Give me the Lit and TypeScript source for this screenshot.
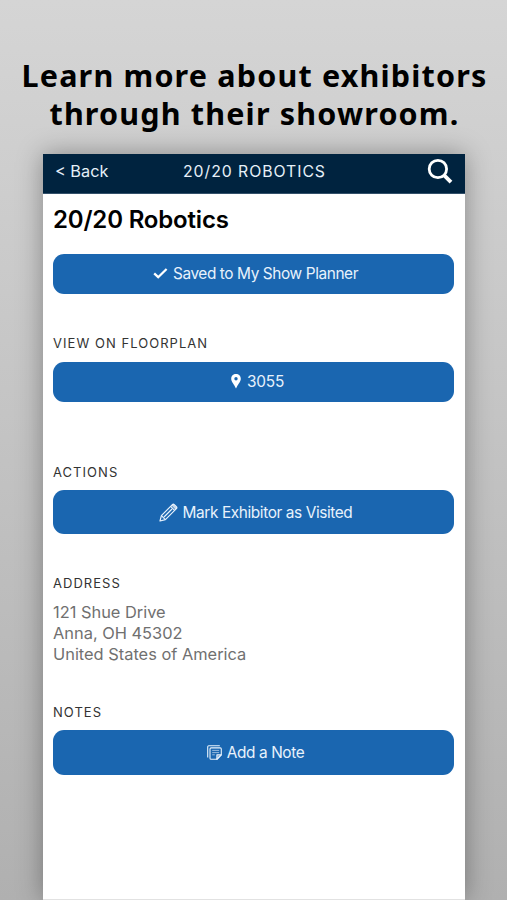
import { LitElement, html, css } from "lit";
import { customElement } from "lit/decorators.js";

const searchIcon = html`<svg class="search" width="28" height="28" viewBox="0 0 28 28" fill="none" stroke="#fff">
  <circle cx="11.9" cy="12" r="8.7" stroke-width="2.8"/><path d="M18.2 18.3L25 25.2" stroke-width="3.8"/></svg>`;
const checkIcon = html`<svg width="15" height="12" viewBox="0 0 15 12" fill="none" stroke="#fff" stroke-width="2.3"><path d="M1.2 5.4L5.2 9.2L13.6 1"/></svg>`;
const pinIcon = html`<svg width="10" height="15" viewBox="0 0 10 15"><path fill="#fff" fill-rule="evenodd" d="M5 0C2.2 0 .2 2.1.2 4.7C.2 7.8 3.4 10.6 5 14.6C6.6 10.6 9.8 7.8 9.8 4.7C9.8 2.1 7.8 0 5 0ZM5 3.1A1.7 1.7 0 1 1 5 6.5A1.7 1.7 0 1 1 5 3.1Z"/></svg>`;
const pencilIcon = html`<svg width="19" height="19" viewBox="0 0 19 19" fill="none" stroke="#e8f2fc" stroke-width="1.2" stroke-linejoin="round"><path d="M1 18L2.4 12.6L13.4 1.6Q14.3.7 15.3 1.6L17.4 3.7Q18.3 4.7 17.4 5.6L6.4 16.6Z"/><path d="M11.6 3.4L15.6 7.4M2.4 12.6L6.4 16.6M5 14L13 6"/><path d="M12.5 2.5L14.3.9L18 4.7L16.4 6.5Z" fill="#fff" fill-opacity=".75" stroke="none"/></svg>`;
const noteIcon = html`<svg width="15" height="15" viewBox="0 0 15 15" fill="none" stroke="#e8f2fc" stroke-width="1.1" stroke-linejoin="round"><path d="M.7 12.6V1.8Q.7.7 1.8.7H12.8"/><path d="M3 4Q3 2.9 4.1 2.9H13.2Q14.3 2.9 14.3 4V9.8L9.9 14.3H4.1Q3 14.3 3 13.2Z"/><path d="M9.9 14.3V9.8H14.3L9.9 14.3Z" fill="#e8f2fc" fill-opacity=".5"/><path d="M5.2 5.4H12.1M5.2 7.6H12.1M5.2 9.8H7.8" stroke-width=".8" stroke-opacity=".75"/></svg>`;

@customElement("app-root")
export class AppRoot extends LitElement {
  static styles = css`
    :host { display: block; height: 900px; overflow: hidden; font-family: Inter, "Liberation Sans", sans-serif;
      background: linear-gradient(#d5d5d5, #b0b0b0); }
    * { box-sizing: border-box; }
    .page { height: 900px; display: flex; flex-direction: column; align-items: center; padding-top: 56px; }
    .headline { margin: 0; height: 97.5px; font: 700 30.5px/38px "Noto Sans", "Open Sans", sans-serif; text-align: center; color: #000; white-space: nowrap; }
    .l1, .l2 { display: block; letter-spacing: 1.17px; padding-left: 2px; }
    .card { width: 422px; height: 746.5px; background: #fff; border-bottom: 1px solid #e2e2e2; box-shadow: 0 0 24px rgba(0,0,0,.34); margin-right: -1px; }
    .bar { height: 40.5px; background: #00233f; border-bottom: 1px solid #33506a; color: #e6f0f8; display: grid;
      grid-template-columns: 1fr auto 1fr; align-items: center; padding: 0 11px 4px 12px; }
    .back { font-size: 16.3px; }
    .title { font-size: 15.8px; letter-spacing: .95px; }
    .search { justify-self: end; }
    .body { padding: 10.7px 11px 0 10px; display: flex; flex-direction: column; }
    h2 { margin: 0 0 19px; font-size: 24px; line-height: 30px; letter-spacing: -.17px; font-weight: 600; color: #000; }
    .btn { height: 40.5px; border-radius: 11px; background: #1a66b0; color: #e8f2fc; font-size: 15.4px; letter-spacing: -.4px;
      display: flex; align-items: center; justify-content: center; gap: 5px; padding-left: 4px; }
    .booth { gap: 6px; padding-left: 8px; letter-spacing: -.2px; }
    .tall { height: 44.5px; }
    .label { font-size: 13px; line-height: 16px; letter-spacing: 1.04px; color: #333; }
    .plan { margin: 41px 0 10.5px; }
    .actions { margin: 61.5px 0 10.3px; }
    .addr { margin: 41px 0 10.5px; }
    .notes { margin: 40px 0 10px; }
    .address { font-size: 16.4px; line-height: 20.8px; color: #707070; }
  `;
  render() {
    return html`<main class="page">
      <h1 class="headline"><span class="l1">Learn more about exhibitors</span><span class="l2">through their showroom.</span></h1>
      <section class="card">
        <header class="bar"><span class="back">&lt; Back</span><span class="title">20/20 ROBOTICS</span>${searchIcon}</header>
        <div class="body">
          <h2>20/20 Robotics</h2>
          <div class="btn saved">${checkIcon}<span>Saved to My Show Planner</span></div>
          <div class="label plan">VIEW ON FLOORPLAN</div>
          <div class="btn booth">${pinIcon}<span>3055</span></div>
          <div class="label actions">ACTIONS</div>
          <div class="btn tall visit">${pencilIcon}<span>Mark Exhibitor as Visited</span></div>
          <div class="label addr">ADDRESS</div>
          <div class="address"><div>121 Shue Drive</div><div>Anna, OH 45302</div><div>United States of America</div></div>
          <div class="label notes">NOTES</div>
          <div class="btn tall add">${noteIcon}<span>Add a Note</span></div>
        </div>
      </section>
    </main>`;
  }
}
